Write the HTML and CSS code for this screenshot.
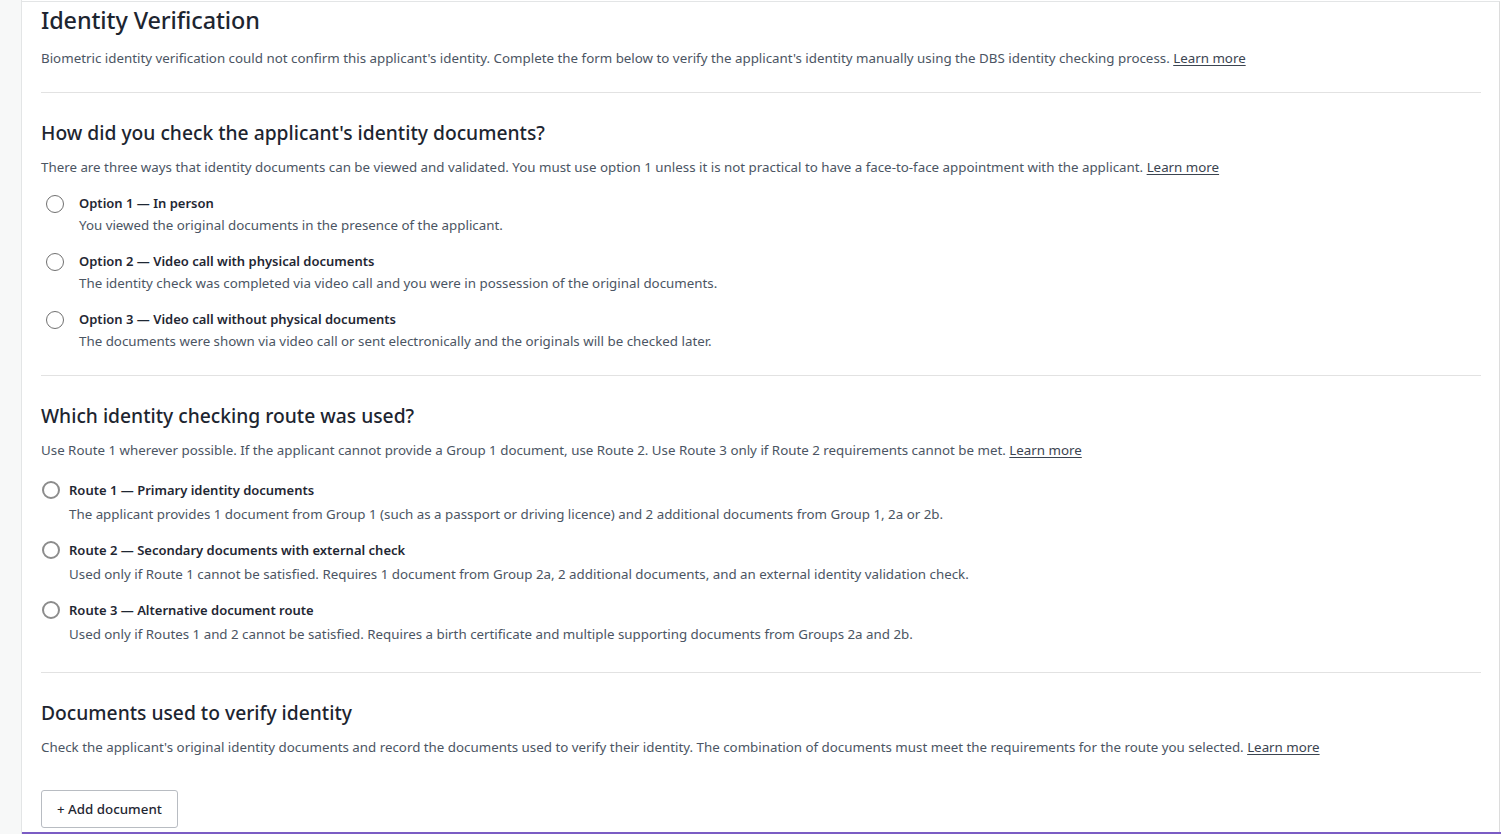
FILE: index.html
```html
<!DOCTYPE html>
<html lang="en">
<head>
<meta charset="utf-8">
<title>Identity Verification</title>
<link rel="stylesheet" href="styles.css">
</head>
<body>
<div class="layout">
  <aside class="rail"></aside>
  <main class="card">
    <h1 class="title">Identity Verification</h1>
    <p class="lead">Biometric identity verification could not confirm this applicant's identity. Complete the form below to verify the applicant's identity manually using the DBS identity checking process. <a href="#" class="link">Learn more</a></p>

    <hr class="divider">

    <section class="section">
      <h2 class="heading">How did you check the applicant's identity documents?</h2>
      <p class="lead tight">There are three ways that identity documents can be viewed and validated. You must use option 1 unless it is not practical to have a face-to-face appointment with the applicant. <a href="#" class="link">Learn more</a></p>
      <div class="options">
        <label class="option">
          <span class="radio"></span>
          <span class="option-text">
            <span class="option-title">Option 1 — In person</span>
            <span class="option-desc">You viewed the original documents in the presence of the applicant.</span>
          </span>
        </label>
        <label class="option">
          <span class="radio"></span>
          <span class="option-text">
            <span class="option-title">Option 2 — Video call with physical documents</span>
            <span class="option-desc">The identity check was completed via video call and you were in possession of the original documents.</span>
          </span>
        </label>
        <label class="option">
          <span class="radio"></span>
          <span class="option-text">
            <span class="option-title">Option 3 — Video call without physical documents</span>
            <span class="option-desc">The documents were shown via video call or sent electronically and the originals will be checked later.</span>
          </span>
        </label>
      </div>
    </section>

    <hr class="divider">

    <section class="section section-routes">
      <h2 class="heading">Which identity checking route was used?</h2>
      <p class="lead tight">Use Route 1 wherever possible. If the applicant cannot provide a Group 1 document, use Route 2. Use Route 3 only if Route 2 requirements cannot be met. <a href="#" class="link">Learn more</a></p>
      <div class="routes">
        <label class="route">
          <span class="radio radio-route"></span>
          <span class="option-text">
            <span class="option-title">Route 1 — Primary identity documents</span>
            <span class="route-desc">The applicant provides 1 document from Group 1 (such as a passport or driving licence) and 2 additional documents from Group 1, 2a or 2b.</span>
          </span>
        </label>
        <label class="route">
          <span class="radio radio-route"></span>
          <span class="option-text">
            <span class="option-title">Route 2 — Secondary documents with external check</span>
            <span class="route-desc">Used only if Route 1 cannot be satisfied. Requires 1 document from Group 2a, 2 additional documents, and an external identity validation check.</span>
          </span>
        </label>
        <label class="route">
          <span class="radio radio-route"></span>
          <span class="option-text">
            <span class="option-title">Route 3 — Alternative document route</span>
            <span class="route-desc">Used only if Routes 1 and 2 cannot be satisfied. Requires a birth certificate and multiple supporting documents from Groups 2a and 2b.</span>
          </span>
        </label>
      </div>
    </section>

    <hr class="divider divider-routes">

    <section class="section">
      <h2 class="heading">Documents used to verify identity</h2>
      <p class="lead tight">Check the applicant's original identity documents and record the documents used to verify their identity. The combination of documents must meet the requirements for the route you selected. <a href="#" class="link">Learn more</a></p>
      <button class="btn" type="button">+ Add document</button>
    </section>
  </main>
</div>
<div class="footer-bar"></div>
</body>
</html>
```

FILE: styles.css
```css
* { box-sizing: border-box; }

html, body {
  margin: 0;
  padding: 0;
  height: 834px;
  overflow: hidden;
  background: #ffffff;
}

body {
  font-family: "Noto Sans", "Open Sans", Arial, sans-serif;
  color: #1f2733;
  position: relative;
}

.layout {
  display: flex;
  align-items: stretch;
  height: 834px;
}

.rail {
  width: 22px;
  flex: 0 0 22px;
  background: #f7f8f8;
  border-right: 1px solid #e3e5e6;
}

.card {
  flex: 1 1 auto;
  margin-top: 1px;
  border-top: 1px solid #e3e5e6;
  border-right: 1px solid #dcdcdc;
  margin-right: 1px;
  padding: 2px 18px 0 19px;
  background: #fff;
}

.title {
  margin: 0;
  font-size: 23.4px;
  line-height: 32px;
  font-weight: 500;
  color: #1d2530;
  letter-spacing: -0.1px;
}

.lead {
  margin: 12px 0 0;
  font-size: 13.33px;
  line-height: 20px;
  color: #4b5563;
}

.lead.tight { margin-top: 10px; }

.link {
  color: #3b4450;
  text-decoration: underline;
  text-underline-offset: 2px;
}

.divider {
  margin: 24px 0 0;
  border: 0;
  border-top: 1px solid #e2e2e2;
  height: 0;
}

.divider-routes { margin-top: 28px; }

.heading {
  margin: 26px 0 0;
  font-size: 19.25px;
  line-height: 28px;
  font-weight: 500;
  color: #1d2530;
}

.options {
  display: flex;
  flex-direction: column;
  gap: 16px;
  margin-top: 16px;
  padding-left: 5px;
}

.option, .route {
  display: flex;
  align-items: flex-start;
  gap: 15px;
  cursor: pointer;
}

.route { gap: 9px; }

.radio {
  flex: 0 0 18px;
  width: 18px;
  height: 18px;
  border: 1.5px solid #707070;
  border-radius: 50%;
  margin-top: 2px;
  background: #fff;
}

.radio-route {
  border: 2px solid #8c8c8c;
  margin-top: 1px;
  margin-left: 1px;
}

.option-text {
  display: flex;
  flex-direction: column;
}

.option-title {
  font-size: 13px;
  line-height: 20px;
  font-weight: 600;
  color: #1f2733;
}

.option-desc {
  margin-top: 2px;
  font-size: 13.33px;
  line-height: 20px;
  color: #4b5563;
}

.routes {
  display: flex;
  flex-direction: column;
  gap: 16px;
  margin-top: 20px;
}

.route-desc {
  margin-top: 4px;
  font-size: 13.33px;
  line-height: 20px;
  color: #4b5563;
}

.btn {
  display: block;
  margin-top: 33px;
  height: 38px;
  padding: 0 15px;
  font-family: inherit;
  font-size: 13.33px;
  font-weight: 500;
  color: #1f2733;
  background: #fff;
  border: 1px solid #b8bcc2;
  border-radius: 3px;
}

.footer-bar {
  position: absolute;
  left: 22px;
  right: 0;
  top: 832px;
  height: 2px;
  background: #7b5cc4;
}
```
